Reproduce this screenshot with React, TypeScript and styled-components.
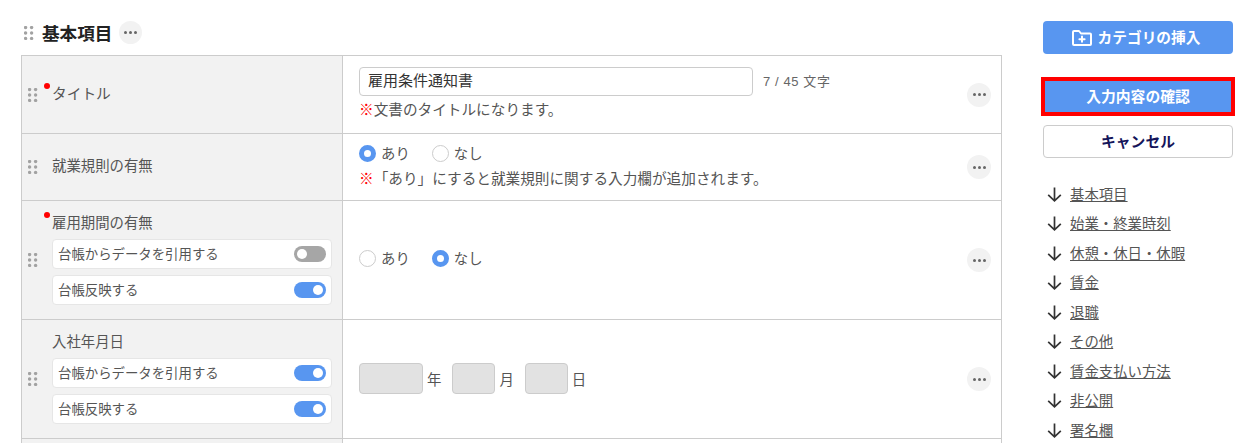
import { ReactNode } from 'react';
import styled, { createGlobalStyle } from 'styled-components';

const GlobalStyle = createGlobalStyle`
  html, body {
    margin: 0;
    height: 443px;
    overflow: hidden;
    background: #fff;
  }
  body {
    font-family: "Liberation Sans", "Noto Sans CJK JP", sans-serif;
    font-size: 14.4px;
    color: #555;
  }
  * { box-sizing: border-box; }
`;

const DragHandle = () => (
  <SHandle viewBox="0 0 10 14" aria-hidden="true">
    {[1.6, 7, 12.4].flatMap((y) =>
      [1.6, 7.6].map((x) => <circle key={`${x}-${y}`} cx={x} cy={y} r="1.7" />)
    )}
  </SHandle>
);

const MoreButton = ({ size = 24 }: { size?: number }) => (
  <SMore $size={size}>
    <i />
    <i />
    <i />
  </SMore>
);

const Radio = ({ checked, label }: { checked?: boolean; label: string }) => (
  <SRadioLabel>
    <SRadioMark $checked={checked} />
    {label}
  </SRadioLabel>
);

const SwitchRow = ({ label, on }: { label: string; on?: boolean }) => (
  <SSwitchRow>
    <span>{label}</span>
    <SSwitch $on={on} />
  </SSwitchRow>
);

const Row = ({
  height,
  required,
  label,
  children,
  switches,
}: {
  height: number;
  required?: boolean;
  label: ReactNode;
  children: ReactNode;
  switches?: boolean[];
}) => (
  <SRow $height={height}>
    <SHead>
      <DragHandle />
      <SHeadBody>
        <SLabel $required={required} $large={!switches && required}>
          {label}
        </SLabel>
        {switches && (
          <SSwitches>
            <SwitchRow label="台帳からデータを引用する" on={switches[0]} />
            <SwitchRow label="台帳反映する" on={switches[1]} />
          </SSwitches>
        )}
      </SHeadBody>
    </SHead>
    <SCell>
      <SCellBody>{children}</SCellBody>
      <MoreButton />
    </SCell>
  </SRow>
);

const links = [
  '基本項目',
  '始業・終業時刻',
  '休憩・休日・休暇',
  '賃金',
  '退職',
  'その他',
  '賃金支払い方法',
  '非公開',
  '署名欄',
];

export default function App() {
  return (
    <>
      <GlobalStyle />
      <SPage>
        <SMain>
          <SSectionTitle>
            <DragHandle />
            <h2>基本項目</h2>
            <MoreButton size={23} />
          </SSectionTitle>
          <STable>
            <Row height={78} required label="タイトル">
              <SInputLine>
                <STextInput>雇用条件通知書</STextInput>
                <SCounter>7 / 45 文字</SCounter>
              </SInputLine>
              <SNote>
                <em>※</em>文書のタイトルになります。
              </SNote>
            </Row>
            <Row height={67} label="就業規則の有無">
              <SRadios>
                <Radio checked label="あり" />
                <Radio label="なし" />
              </SRadios>
              <SNote>
                <em>※</em>「あり」にすると就業規則に関する入力欄が追加されます。
              </SNote>
            </Row>
            <Row height={119} required label="雇用期間の有無" switches={[false, true]}>
              <SRadios>
                <Radio label="あり" />
                <Radio checked label="なし" />
              </SRadios>
            </Row>
            <Row height={119} label="入社年月日" switches={[true, true]}>
              <SDate>
                <SDateBox $width={64} />年
                <SDateBox $width={43} />月
                <SDateBox $width={43} />日
              </SDate>
            </Row>
            <SRow $height={40}>
              <SHead />
              <SCell />
            </SRow>
          </STable>
        </SMain>
        <SSide>
          <SInsertButton>
            <svg width="20" height="16" viewBox="0 0 20 16" fill="none" stroke="#fff" strokeWidth="2" strokeLinejoin="round" strokeLinecap="round">
              <path d="M1 14V2c0-.6.4-1 1-1h5l2 2.5h9c.6 0 1 .4 1 1V14c0 .6-.4 1-1 1H2c-.6 0-1-.4-1-1z" />
              <path d="M10 6.6v5.2M7.4 9.2h5.2" />
            </svg>
            <span>カテゴリの挿入</span>
          </SInsertButton>
          <SConfirmButton>
            <span>入力内容の確認</span>
          </SConfirmButton>
          <SCancelButton>
            <span>キャンセル</span>
          </SCancelButton>
          <SLinks>
            {links.map((link) => (
              <li key={link}>
                <svg width="15" height="15" viewBox="0 0 15 15" fill="none" stroke="#333" strokeWidth="1.7">
                  <path d="M7.5 .5v13M1.2 7.8l6.3 6 6.3-6" />
                </svg>
                <a href="#top">{link}</a>
              </li>
            ))}
          </SLinks>
        </SSide>
      </SPage>
    </>
  );
}

const SPage = styled.div`
  display: flex;
  align-items: flex-start;
  padding-left: 21px;
  height: 443px;
  overflow: hidden;
`;

const SMain = styled.main`
  width: 981px;
  flex: none;
  padding-top: 21px;
`;

const SHandle = styled.svg`
  width: 10px;
  height: 14px;
  flex: none;
  fill: #a2a2a2;
`;

const SMore = styled.span<{ $size: number }>`
  width: ${(p) => p.$size}px;
  height: ${(p) => p.$size}px;
  flex: none;
  border-radius: 50%;
  background: #f2f2f2;
  display: flex;
  align-items: center;
  justify-content: center;
  gap: 2px;

  i {
    width: 3px;
    height: 3px;
    border-radius: 50%;
    background: #666;
  }
`;

const SSectionTitle = styled.div`
  height: 23px;
  margin-bottom: 11px;
  padding-left: 3px;
  display: flex;
  align-items: center;

  h2 {
    margin: 0 7px 0 8px;
    font-size: 17.6px;
    font-weight: 700;
    color: #222;
  }
`;

const STable = styled.div`
  border: 1px solid #ccc;
  border-bottom: 0;
`;

const SRow = styled.div<{ $height: number }>`
  height: ${(p) => p.$height}px;
  display: grid;
  grid-template-columns: 321px 1fr;
  border-bottom: 1px solid #ccc;
`;

const SHead = styled.div`
  background: #f2f2f2;
  border-right: 1px solid #ccc;
  padding: 0 10px 0 6px;
  display: flex;
  align-items: center;
`;

const SHeadBody = styled.div`
  flex: 1;
  margin-left: 14px;
  padding-bottom: 2px;
`;

const SLabel = styled.div<{ $required?: boolean; $large?: boolean }>`
  position: relative;
  font-size: ${(p) => (p.$large ? 14.7 : 14.4)}px;
  line-height: 20px;

  ${(p) =>
    p.$required &&
    `
    &::before {
      content: "";
      position: absolute;
      left: -8px;
      top: -1px;
      width: 6px;
      height: 6px;
      border-radius: 50%;
      background: #f00;
    }
  `}
`;

const SSwitches = styled.div`
  margin-top: 6px;
  display: flex;
  flex-direction: column;
  gap: 6px;
`;

const SSwitchRow = styled.div`
  height: 30px;
  background: #fff;
  border: 1px solid #e6e6e6;
  border-radius: 4px;
  padding: 0 5px;
  display: flex;
  align-items: center;
  justify-content: space-between;
  font-size: 13.4px;

  span:first-child {
    padding-bottom: 2px;
  }
`;

const SSwitch = styled.span<{ $on?: boolean }>`
  position: relative;
  width: 32px;
  height: 16px;
  border-radius: 8px;
  background: ${(p) => (p.$on ? '#5896f0' : '#a6a6a6')};

  &::after {
    content: "";
    position: absolute;
    top: 3px;
    left: ${(p) => (p.$on ? 19 : 3)}px;
    width: 10px;
    height: 10px;
    border-radius: 50%;
    background: #fff;
  }
`;

const SCell = styled.div`
  padding: 0 10px 0 16px;
  display: flex;
  align-items: center;
  justify-content: space-between;
`;

const SCellBody = styled.div`
  display: flex;
  flex-direction: column;
  padding-bottom: 2px;
`;

const SInputLine = styled.div`
  display: flex;
  align-items: center;
  gap: 10px;
`;

const STextInput = styled.div`
  width: 394px;
  height: 29px;
  border: 1px solid #ccc;
  border-radius: 4px;
  padding: 0 8px;
  font-size: 15px;
  line-height: 25px;
  color: #333;
`;

const SCounter = styled.span`
  font-size: 13px;
  color: #666;
  letter-spacing: 0.6px;
  padding-bottom: 2px;
`;

const SNote = styled.p`
  margin: 4px 0 0;
  font-size: 14.65px;
  line-height: 20px;

  em {
    font-style: normal;
    font-weight: 700;
    color: #f00;
  }
`;

const SRadios = styled.div`
  display: flex;
  gap: 22px;
  margin-bottom: 1px;
`;

const SRadioLabel = styled.label`
  display: flex;
  align-items: center;
  gap: 5px;
  line-height: 20px;
`;

const SRadioMark = styled.span<{ $checked?: boolean }>`
  width: 17px;
  height: 17px;
  border-radius: 50%;
  background: #fff;
  border: ${(p) => (p.$checked ? '5px solid #5896f0' : '1px solid #ccc')};
`;

const SDate = styled.div`
  display: flex;
  align-items: center;
`;

const SDateBox = styled.span<{ $width: number }>`
  width: ${(p) => p.$width}px;
  height: 31px;
  background: #e2e2e2;
  border: 1px solid #ccc;
  border-radius: 4px;
  margin-right: 4px;

  &:not(:first-child) {
    margin-left: 11px;
  }
`;

const SSide = styled.aside`
  width: 190px;
  margin-left: 41px;
  padding-top: 21px;
  flex: none;

  span {
    padding-bottom: 3px;
  }
`;

const SInsertButton = styled.div`
  height: 33px;
  border-radius: 4px;
  background: #5896f0;
  color: #fff;
  font-weight: 700;
  font-size: 14.7px;
  display: flex;
  align-items: center;
  justify-content: center;
  gap: 6px;
  padding-right: 4px;
`;

const SConfirmButton = styled.div`
  height: 39px;
  margin: 23px -2px 0;
  background: #5896f0;
  border: 4px solid #f00;
  color: #fff;
  font-weight: 700;
  font-size: 14.8px;
  display: flex;
  align-items: center;
  justify-content: center;
`;

const SCancelButton = styled.div`
  height: 33px;
  margin-top: 9px;
  border: 1px solid #ccc;
  border-radius: 4px;
  background: #fff;
  color: #14145a;
  font-weight: 700;
  font-size: 14.8px;
  display: flex;
  align-items: center;
  justify-content: center;
`;

const SLinks = styled.ul`
  list-style: none;
  margin: 21.6px 0 0;
  padding: 0 0 0 4px;

  li {
    height: 29.5px;
    display: flex;
    align-items: center;
    gap: 8px;
  }

  a {
    color: #555;
    text-decoration: underline;
    padding-bottom: 2px;
  }
`;
